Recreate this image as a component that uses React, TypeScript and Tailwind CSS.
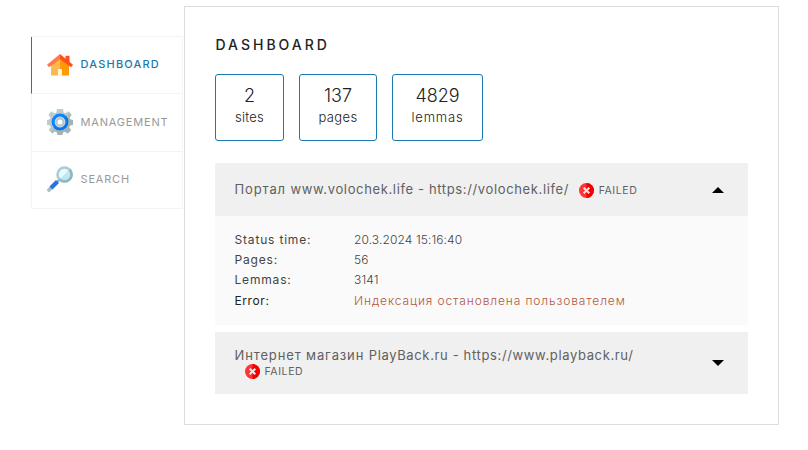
import type { ReactNode } from "react";

function HouseIcon() {
  return (
    <svg width="26" height="22" viewBox="0 0 26 22" className="shrink-0">
      <path d="M18.500 1.800h4v7h-4z" fill="#ff4b1f" />
      <path d="M4 10 13 3v18.600H4z" fill="#ffb74f" />
      <path d="M13 3l9 7v11.600h-9z" fill="#ff9a07" />
      <path d="M11 15h4v7h-4z" fill="#fff4e0" />
      <path d="M13 0v5.200L2 13.200 0 10.800z" fill="#ff7a45" />
      <path d="M13 0v5.200l11 8 2-2.400z" fill="#ff4f1f" />
    </svg>
  );
}

function GearIcon() {
  return (
    <svg width="26" height="26" viewBox="0 0 26 26" className="shrink-0">
      <defs>
        <linearGradient id="gear" x1="0" y1="0" x2="1" y2="1">
          <stop offset="0.450" stopColor="#bccbcb" />
          <stop offset="0.600" stopColor="#a3b3b3" />
        </linearGradient>
      </defs>
      <path
        d="M10 0h6l.7 3.400 2 .8L21.700 2.300l3 3.800-2.200 2.400.8 1.800L26 11v5l-3 .6-.8 1.900 2 2.800-3.500 3.500-2.800-2-1.900.8L15.400 26h-4.900l-.6-2.600-1.900-.8-2.800 1.900-3.500-3.500 2-2.700-.8-1.800L0 16v-5l2.800-.7.800-1.900-2.200-2.400 3-3.700 3 1.900 2-.8z"
        fill="url(#gear)"
      />
      <circle cx="13" cy="13" r="6.900" fill="#d5dfdf" stroke="#0a84ff" strokeWidth="3" />
      <path d="M18.500 7.500A7.800 7.800 0 0 1 7.500 18.500" fill="none" stroke="#0670e8" strokeWidth="1.400" />
      <circle cx="13" cy="13" r="3.500" fill="#fff" stroke="#b3c1c2" strokeWidth="1.800" />
    </svg>
  );
}

function LensIcon() {
  return (
    <svg width="26" height="26" viewBox="0 0 26 26" className="shrink-0">
      <path d="M9.500 16.500l3.500-3.500" stroke="#8aa9b0" strokeWidth="2" />
      <path d="M2 24l3-3" stroke="#a5bfc4" strokeWidth="3.800" strokeLinecap="round" />
      <path d="M4 22l6.500-6.500" stroke="#2f6fe4" strokeWidth="4.200" />
      <circle cx="17.500" cy="8.500" r="7" fill="#e9f9fd" stroke="#a6cfd9" strokeWidth="2.600" />
      <path d="M21.600 4.400a5.800 5.800 0 0 1-8.200 8.200z" fill="#bfe7f2" />
      <path d="M22.500 3.500a7 7 0 0 1-10 10" fill="none" stroke="#8fb8c1" strokeWidth="2.600" />
    </svg>
  );
}

function FailedBadge({ className }: { className: string }) {
  return (
    <span className={`flex h-[15px] items-center ${className}`}>
      <svg width="15" height="15" viewBox="0 0 15 15" className="shrink-0">
        <circle cx="7.500" cy="7.500" r="7.500" fill="#ff3333" />
        <path d="M7.500 0a7.500 7.500 0 0 1 0 15z" fill="#f20000" />
        <path d="M4.700 4.700l5.600 5.600M10.300 4.700l-5.600 5.600" stroke="#f3e8e8" strokeWidth="2" />
      </svg>
      <span className="ml-[4.500px] text-[10.500px] leading-[15px] tracking-[0.600px] text-[#606060]">FAILED</span>
    </span>
  );
}

function SiteName({ name, rest }: { name: string; rest: string }) {
  return (
    <div className="text-[13px] leading-[16px] whitespace-nowrap text-[#606060]">
      <span className="tracking-[0.860px]">{name} </span>
      <span className="tracking-[0.640px]">{rest}</span>
    </div>
  );
}

function NavItem({ icon, label, active }: { icon: ReactNode; label: string; active?: boolean }) {
  return (
    <a
      className={`flex h-[57.330px] items-center gap-[7.500px] border-r border-b border-l border-r-[#f7f7f7] border-b-[#f3f3f3] pb-[1px] pl-[15px] text-[11px] ${
        active
          ? "border-l-[#1a79b0] font-medium tracking-[1.200px] text-[#1a79b0]"
          : "border-l-[#f3f3f3] tracking-[0.820px] text-[#999]"
      }`}
    >
      {icon}
      <span>{label}</span>
    </a>
  );
}

function Stat({ value, label, className }: { value: string; label: string; className: string }) {
  return (
    <div className={`flex h-[67px] flex-col items-center rounded-[3px] border border-[#1a79b0] pt-[10px] font-light text-[#222] ${className}`}>
      <span className="text-[18px] leading-[22px] tracking-normal">{value}</span>
      <span className="text-[13px] leading-[20px]">{label}</span>
    </div>
  );
}

function Detail({ label, value, error }: { label: string; value: string; error?: boolean }) {
  return (
    <div className={`flex items-center text-[12px] ${error ? "h-[22px]" : "h-[20px]"}`}>
      <span className={`w-[119.500px] ${error ? "tracking-[0.600px] text-[#222]" : "tracking-[0.820px] text-[#444]"}`}>
        {label}
      </span>
      <span className={error ? "font-light tracking-[0.890px] text-[#b3583c]" : "font-light tracking-[0.110px] text-[#444]"}>
        {value}
      </span>
    </div>
  );
}

export default function App() {
  return (
    <div className="flex h-[450px] w-[808px] items-start overflow-hidden bg-white pl-[31px] font-['Inter','Noto_Sans',sans-serif]">
      <nav className="mt-[36px] mr-[1px] w-[152px] border-t border-t-[#f3f3f3]">
        <NavItem icon={<HouseIcon />} label="DASHBOARD" active />
        <NavItem icon={<GearIcon />} label="MANAGEMENT" />
        <NavItem icon={<LensIcon />} label="SEARCH" />
      </nav>
      <main className="mt-[6px] h-[419px] w-[595px] border border-[#ddd] px-[30px] pt-[28px]">
        <h1 className="pl-[0.500px] text-[14px] leading-[20px] font-medium tracking-[3px] text-[#222]">DASHBOARD</h1>
        <div className="mt-[19px] flex gap-[15px]">
          <Stat value="2" label="sites" className="w-[69px] tracking-[0.200px]" />
          <Stat value="137" label="pages" className="w-[78px] tracking-[0.400px]" />
          <Stat value="4829" label="lemmas" className="w-[91px] tracking-[0.850px]" />
        </div>
        <section className="mt-[22px] bg-[#fafafa]">
          <header className="flex h-[53px] items-center bg-[#f0f0f0] pr-[24px] pl-[19.500px]">
            <div className="pb-[2px]">
              <SiteName name="Портал" rest="www.volochek.life - https://volochek.life/" />
            </div>
            <FailedBadge className="ml-[10px] mt-[2px]" />
            <svg width="12" height="6" viewBox="0 0 12 6" className="ml-auto">
              <path d="M0 6l6-6 6 6z" fill="#000" />
            </svg>
          </header>
          <div className="h-[109px] pt-[14px] pl-[19.500px]">
            <Detail label="Status time:" value="20.3.2024 15:16:40" />
            <Detail label="Pages:" value="56" />
            <Detail label="Lemmas:" value="3141" />
            <Detail label="Error:" value="Индексация остановлена пользователем" error />
          </div>
        </section>
        <section className="mt-[7px] flex h-[62px] items-center justify-between bg-[#f0f0f0] pr-[24px] pl-[19.500px]">
          <div className="pb-[1px]">
            <SiteName name="Интернет магазин" rest="PlayBack.ru - https://www.playback.ru/" />
            <FailedBadge className="mt-[1px] ml-[10.500px]" />
          </div>
          <svg width="12" height="6" viewBox="0 0 12 6">
            <path d="M0 0h12l-6 6z" fill="#000" />
          </svg>
        </section>
      </main>
    </div>
  );
}
